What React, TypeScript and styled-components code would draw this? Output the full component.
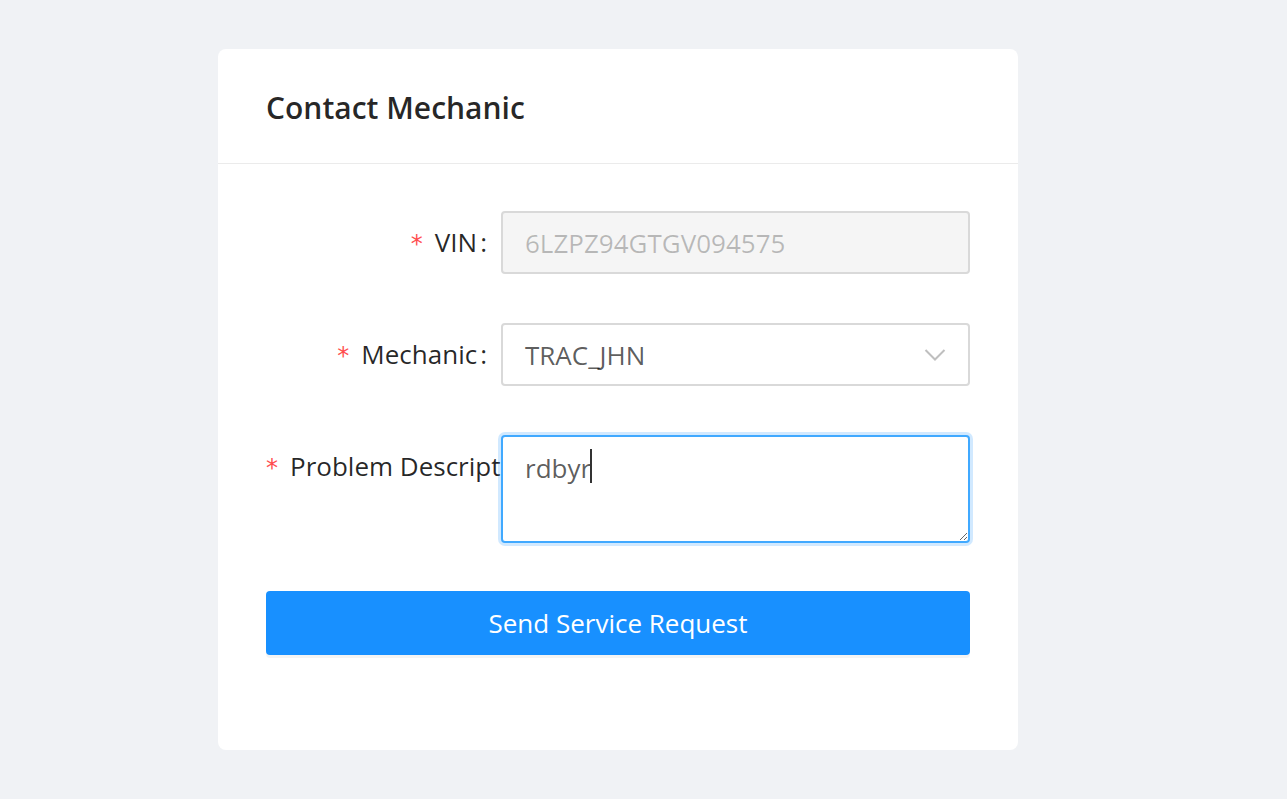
import * as React from 'react'
import styled, { createGlobalStyle } from 'styled-components'

const Global = createGlobalStyle`
  html, body {
    margin: 0;
    padding: 0;
    background: #f0f2f5;
    font-family: "Open Sans", "Noto Sans", sans-serif;
  }
  * { box-sizing: border-box; }
`

const ContactMechanic = () => {
  return (
    <Page>
      <Global />
      <Card>
        <Header>
          <Title>Contact Mechanic</Title>
        </Header>
        <Body>
          <Row>
            <Label>
              <Req>*</Req>VIN<Colon>:</Colon>
            </Label>
            <Input disabled value="6LZPZ94GTGV094575" readOnly />
          </Row>
          <Row>
            <Label>
              <Req>*</Req>Mechanic<Colon>:</Colon>
            </Label>
            <Select>
              <span>TRAC_JHN</span>
              <svg width="22" height="14" viewBox="0 0 22 14" fill="none">
                <path d="M1.5 2 L11 11.5 L20.5 2" stroke="#bfbfbf" strokeWidth="2" />
              </svg>
            </Select>
          </Row>
          <Row $last>
            <Label>
              <Req>*</Req>Problem Description<Colon>:</Colon>
            </Label>
            <AreaWrap>
              <TextArea value="rdbyr" readOnly />
              {/* static text caret, the field is shown focused */}
              <Caret />
            </AreaWrap>
          </Row>
          <Submit>Send Service Request</Submit>
        </Body>
      </Card>
    </Page>
  )
}

export default ContactMechanic

// Styles
const Page = styled.div`
  min-height: 100vh;
  padding: 49px 218px;
`

const Card = styled.div`
  width: 800px;
  background: #fff;
  border-radius: 8px;
`

const Header = styled.div`
  height: 115px;
  padding: 0 48px;
  display: flex;
  align-items: center;
  border-bottom: 1px solid #ebebeb;
`

const Title = styled.h2`
  margin: 2px 0 0;
  font-size: 30px;
  font-weight: 600;
  color: rgba(0, 0, 0, 0.85);
`

const Body = styled.div`
  padding: 47px 48px 95px;
`

const Row = styled.div<{ $last?: boolean }>`
  display: grid;
  grid-template-columns: 235px 469px;
  margin-bottom: ${(p) => (p.$last ? '48px' : '49px')};
`

const Label = styled.label`
  display: block;
  height: 63px;
  line-height: 63px;
  text-align: right;
  white-space: nowrap;
  overflow: hidden;
  font-size: 26px;
  color: rgba(0, 0, 0, 0.85);
  padding-right: 14px;
`

const Req = styled.span`
  color: #ff4d4f;
  margin-right: 12px;
  font-family: "DejaVu Sans", sans-serif;
  font-size: 24px;
`

const Colon = styled.span`
  margin-left: 3px;
`

const Input = styled.input`
  height: 63px;
  width: 100%;
  padding: 0 22px;
  font: inherit;
  font-size: 26px;
  border: 2px solid #d9d9d9;
  border-radius: 4px;
  background: #f5f5f5;
  color: rgba(0, 0, 0, 0.25);
  -webkit-text-fill-color: rgba(0, 0, 0, 0.25);
  outline: none;
`

const Select = styled.div`
  height: 63px;
  padding: 0 22px;
  display: flex;
  align-items: center;
  justify-content: space-between;
  border: 2px solid #d9d9d9;
  border-radius: 4px;
  font-size: 26px;
  color: rgba(0, 0, 0, 0.65);
  background: #fff;
`

const AreaWrap = styled.div`
  position: relative;
  height: 108px;
`

const TextArea = styled.textarea`
  display: block;
  width: 100%;
  height: 108px;
  padding: 14px 22px;
  font: inherit;
  font-size: 26px;
  line-height: 34px;
  color: rgba(0, 0, 0, 0.65);
  border: 2px solid #40a9ff;
  border-radius: 4px;
  box-shadow: 0 0 0 3px rgba(24, 144, 255, 0.2);
  outline: none;
  caret-color: transparent;
  resize: vertical;
`

const Caret = styled.span`
  position: absolute;
  top: 14px;
  left: 89px;
  width: 2px;
  height: 34px;
  background: #333;
  pointer-events: none;
`

const Submit = styled.button`
  display: block;
  width: 704px;
  height: 64px;
  border: none;
  border-radius: 4px;
  background: #1890ff;
  color: #fff;
  font: inherit;
  font-size: 26px;
  box-shadow: 0 3px 0 rgba(0, 0, 0, 0.045);
  cursor: pointer;
`
